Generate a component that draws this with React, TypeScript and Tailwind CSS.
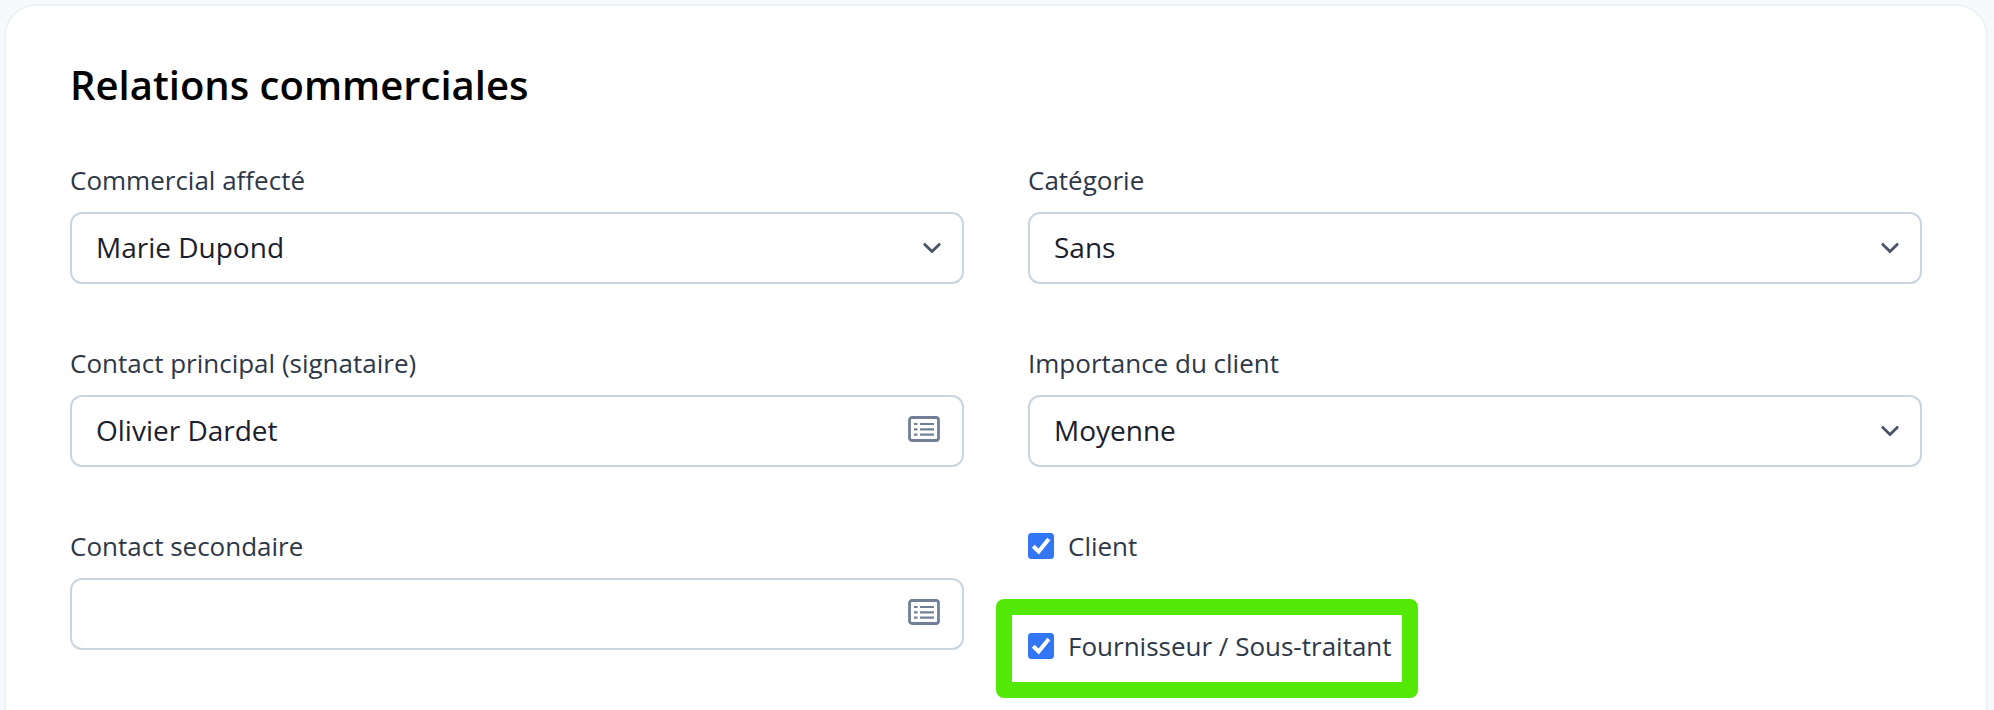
import type { ReactNode } from 'react';

const control =
  'h-[72px] w-full appearance-none rounded-xl border-2 border-[#cbd5e0] bg-white pl-6 text-[28px] text-[#1a202c] outline-none';

function Field({ id, label, children }: { id: string; label: string; children: ReactNode }) {
  return (
    <div className="flex flex-col gap-3.5">
      <label htmlFor={id} className="text-[26px] leading-9">
        {label}
      </label>
      {children}
    </div>
  );
}

function SelectField({ id, label, options }: { id: string; label: string; options: string[] }) {
  return (
    <Field id={id} label={label}>
      <div className="relative">
        <select id={id} className={`${control} pr-16 pb-0.5`}>
          {options.map((o) => (
            <option key={o}>{o}</option>
          ))}
        </select>
        <svg
          viewBox="0 0 20 20"
          className="pointer-events-none absolute inset-y-0 right-3.5 my-auto size-9"
          fill="none"
          stroke="#4a5568"
          strokeWidth="1.6"
          strokeLinecap="round"
          strokeLinejoin="round"
          aria-hidden="true"
        >
          <path d="M6 8l4 4 4-4" />
        </svg>
      </div>
    </Field>
  );
}

function ContactField({ id, label, value }: { id: string; label: string; value: string }) {
  return (
    <Field id={id} label={label}>
      <div className="relative">
        <input id={id} type="text" defaultValue={value} className={`${control} pr-20 pb-0.5`} />
        <button
          type="button"
          aria-label="Choisir un contact"
          className="absolute inset-y-0 right-6 flex items-center pb-1"
        >
          <svg viewBox="0 0 32 26" className="h-[26px] w-8" fill="none" stroke="#718096" aria-hidden="true">
            <rect x="1.5" y="1.5" width="29" height="23" rx="2.5" strokeWidth="2.8" />
            <path d="M6 8h3.500M6 13.300h3.500M6 18.600h3.500M12 8h14M12 13.300h14M12 18.600h14" strokeWidth="2.200" />
          </svg>
        </button>
      </div>
    </Field>
  );
}

function CheckField({ id, label, highlighted }: { id: string; label: string; highlighted?: boolean }) {
  return (
    <div className="relative flex items-center gap-3.5">
      {highlighted && (
        <span className="pointer-events-none absolute -top-[29px] -right-[26px] -bottom-[34px] -left-8 rounded-lg border-[16px] border-[#54e806]" />
      )}
      <span className="grid">
        <input
          id={id}
          type="checkbox"
          defaultChecked
          className="peer col-start-1 row-start-1 size-[26px] appearance-none rounded-[3px] border border-[#cbd5e0] checked:border-[#3275f5] checked:bg-[#3275f5]"
        />
        <svg
          viewBox="0 0 26 26"
          className="pointer-events-none invisible col-start-1 row-start-1 size-[26px] peer-checked:visible"
          fill="none"
          stroke="white"
          strokeWidth="4"
          aria-hidden="true"
        >
          <path d="M5.200 13.200l5.500 5.300L20.800 6" />
        </svg>
      </span>
      <label htmlFor={id} className="text-[26px] leading-9">
        {label}
      </label>
    </div>
  );
}

export default function App() {
  return (
    <main className="flex min-h-screen bg-[#f7fafc] pt-1 pr-1.5 pl-1 font-['Open_Sans','Noto_Sans',sans-serif] text-[#2d3748]">
      <section className="flex-1 rounded-t-[32px] border-2 border-b-0 border-[#edf2f7] bg-white px-16 pt-[51px] pb-10">
        <h2 className="text-[40px] leading-[56px] font-semibold text-black">Relations commerciales</h2>
        <div className="mt-[49px] grid grid-cols-2 gap-x-16 gap-y-[61px]">
          <SelectField id="commercial" label="Commercial affecté" options={['Marie Dupond']} />
          <SelectField id="categorie" label="Catégorie" options={['Sans']} />
          <ContactField id="contact-principal" label="Contact principal (signataire)" value="Olivier Dardet" />
          <SelectField id="importance" label="Importance du client" options={['Moyenne', 'Faible', 'Haute']} />
          <ContactField id="contact-secondaire" label="Contact secondaire" value="" />
          <div className="flex flex-col items-start gap-16">
            <CheckField id="client" label="Client" />
            <CheckField id="fournisseur" label="Fournisseur / Sous-traitant" highlighted />
          </div>
        </div>
      </section>
    </main>
  );
}
